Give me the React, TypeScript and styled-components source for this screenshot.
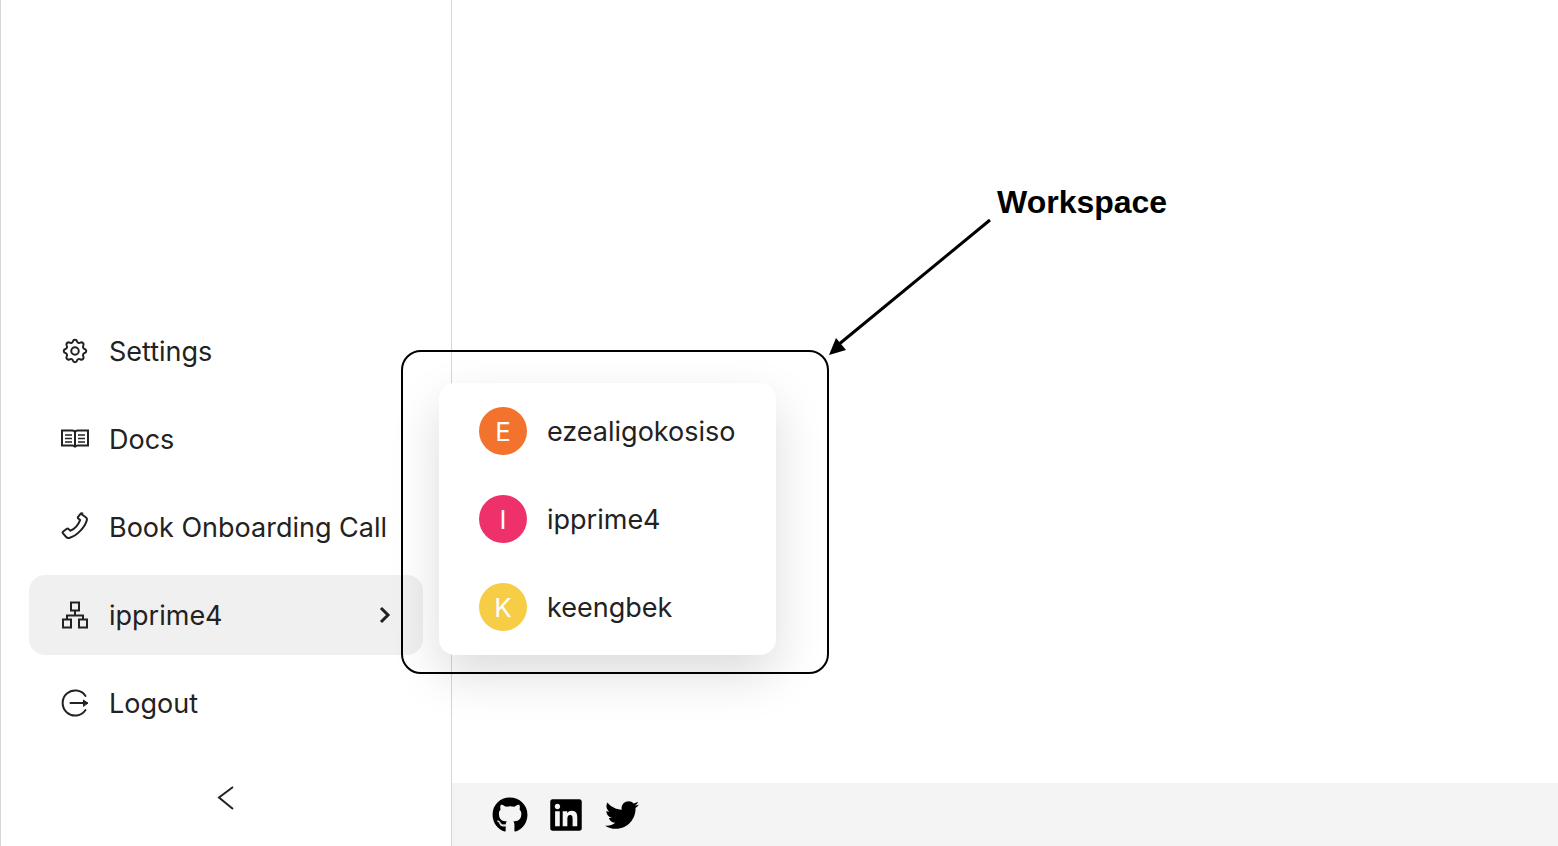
import React from "react";
import styled, { createGlobalStyle } from "styled-components";
import { FaGithub, FaLinkedin, FaTwitter } from "react-icons/fa";
import { TbSettings } from "react-icons/tb";

const GlobalStyle = createGlobalStyle`
  html, body {
    margin: 0;
    padding: 0;
    background: #fff;
    overflow: hidden;
  }
  * {
    box-sizing: border-box;
  }
`;

const Page = styled.div`
  position: relative;
  display: flex;
  width: 100%;
  height: 100vh;
  font-family: Inter, "Liberation Sans", sans-serif;
  color: #222;
`;

const Sidebar = styled.aside`
  width: 452px;
  flex: none;
  display: flex;
  flex-direction: column;
  justify-content: flex-end;
  padding: 0 28px;
  border-left: 1px solid #d6d6d6;
  border-right: 1px solid #d6d6d6;
`;

const NavList = styled.nav`
  display: flex;
  flex-direction: column;
  gap: 8px;
`;

const NavItem = styled.div<{ $active?: boolean }>`
  height: 80px;
  display: flex;
  align-items: center;
  gap: 19px;
  padding: 0 31px;
  border-radius: 16px;
  font-size: 27px;
  white-space: nowrap;
  background: ${(p) => (p.$active ? "#f0f0f0" : "transparent")};
`;

const NavIcon = styled.span`
  width: 30px;
  height: 30px;
  flex: none;
  display: flex;
  align-items: center;
  justify-content: center;
`;

const NavLabel = styled.span`
  flex: 1;
`;

const CollapseRow = styled.div`
  height: 103px;
  display: flex;
  align-items: center;
  justify-content: center;
  padding-top: 7px;
`;

const Main = styled.main`
  flex: 1;
  display: flex;
  flex-direction: column;
  justify-content: flex-end;
`;

const Footer = styled.footer`
  height: 63px;
  display: flex;
  align-items: center;
  gap: 20px;
  padding-left: 40px;
  background: #f4f4f4;
  color: #000;
`;

const SocialIcon = styled.span`
  width: 36px;
  height: 36px;
  display: flex;
  align-items: center;
  justify-content: center;
`;

const WorkspaceMenu = styled.div`
  position: absolute;
  left: 439px;
  top: 383px;
  width: 337px;
  padding: 4px 0;
  background: #fff;
  border-radius: 16px;
  box-shadow: 0 20px 50px rgba(0, 0, 0, 0.14);
`;

const WorkspaceRow = styled.div`
  height: 88px;
  display: flex;
  align-items: center;
  gap: 20px;
  padding: 0 40px;
  font-size: 27px;
`;

const Avatar = styled.span<{ $color: string }>`
  width: 48px;
  height: 48px;
  flex: none;
  display: flex;
  align-items: center;
  justify-content: center;
  border-radius: 50%;
  color: #fff;
  font-size: 26px;
  background: ${(p) => p.$color};
`;

const Highlight = styled.div`
  position: absolute;
  left: 401px;
  top: 350px;
  width: 428px;
  height: 324px;
  border: 2px solid #000;
  border-radius: 20px;
  pointer-events: none;
`;

const CalloutLabel = styled.div`
  position: absolute;
  left: 997px;
  top: 184px;
  font-family: "Liberation Sans", Arial, sans-serif;
  font-weight: 700;
  font-size: 32px;
  line-height: 37px;
  color: #000;
`;

const CalloutArrow = styled.svg`
  position: absolute;
  left: 820px;
  top: 210px;
`;

const stroke = {
  fill: "none",
  stroke: "currentColor",
  strokeWidth: 2,
  strokeLinecap: "round" as const,
  strokeLinejoin: "round" as const,
};

function BookIcon() {
  return (
    <svg width="30" height="30" viewBox="0 0 30 30" {...stroke} strokeLinecap="butt" strokeLinejoin="miter">
      <path d="M2 6.5h10c1.6 0 3 .8 3 2v15c0-1-1.4-2-3-2H2zM28 6.5H18c-1.600 0-3 .8-3 2v15c0-1 1.400-2 3-2h10z" />
      <path d="M5 11h7M5 14.500h7M5 18h7M18 11h7M18 14.500h7M18 18h7" strokeWidth="1.700" />
    </svg>
  );
}

function PhoneIcon() {
  return (
    <svg width="30" height="30" viewBox="0 0 30 30" {...stroke}>
      <path d="M22 2.500l3.800 2.700c1 .8 1.400 1.800 1 3-1.600 6.600-9.600 15.400-17 17.600-1.500.4-2.700.2-3.600-.8l-3.200-3.600c-.6-.7-.5-1.400.2-1.900l3.600-2.700c.6-.4 1.200-.4 1.700.1l2 1.800c3.800-1.700 8-6.400 9.600-10.600l-1.800-1.500c-.6-.5-.6-1.200-.2-1.800l2.400-3c.5-.6 1.200-.6 1.800-.3z" />
    </svg>
  );
}

function NetworkIcon() {
  return (
    <svg width="30" height="30" viewBox="0 0 30 30" {...stroke} strokeLinecap="butt" strokeLinejoin="miter">
      <path d="M11 2.500h8v8h-8zM3 19.500h8v8H3zM19 19.500h8v8h-8zM15 10.500v5M7 19.500v-4h16v4" />
    </svg>
  );
}

function LogoutIcon() {
  return (
    <svg width="30" height="30" viewBox="0 0 30 30" {...stroke}>
      <path d="M25.500 8A12.500 12.500 0 1 0 25.500 22" />
      <path d="M10.500 15H27" />
      <path d="M27.500 15l-4-3v6z" fill="currentColor" strokeWidth="1" />
    </svg>
  );
}

function ChevronRight() {
  return (
    <svg width="14" height="20" viewBox="0 0 14 20" fill="none" stroke="#222" strokeWidth="3">
      <path d="M3 3l7 7-7 7" />
    </svg>
  );
}

function ChevronLeft() {
  return (
    <svg width="20" height="28" viewBox="0 0 20 28" fill="none" stroke="#222" strokeWidth="2">
      <path d="M17 3L3 13.500 17 25" />
    </svg>
  );
}

const workspaces = [
  { name: "ezealigokosiso", initial: "E", color: "#f2722e" },
  { name: "ipprime4", initial: "I", color: "#ee316b" },
  { name: "keengbek", initial: "K", color: "#f7cd45" },
];

export default function App() {
  return (
    <Page>
      <GlobalStyle />
      <Sidebar>
        <NavList>
          <NavItem>
            <NavIcon>
              <TbSettings size={32} strokeWidth={1.6} />
            </NavIcon>
            <NavLabel>Settings</NavLabel>
          </NavItem>
          <NavItem>
            <NavIcon>
              <BookIcon />
            </NavIcon>
            <NavLabel>Docs</NavLabel>
          </NavItem>
          <NavItem>
            <NavIcon>
              <PhoneIcon />
            </NavIcon>
            <NavLabel>Book Onboarding Call</NavLabel>
          </NavItem>
          <NavItem $active>
            <NavIcon>
              <NetworkIcon />
            </NavIcon>
            <NavLabel>ipprime4</NavLabel>
            <ChevronRight />
          </NavItem>
          <NavItem>
            <NavIcon>
              <LogoutIcon />
            </NavIcon>
            <NavLabel>Logout</NavLabel>
          </NavItem>
        </NavList>
        <CollapseRow>
          <ChevronLeft />
        </CollapseRow>
      </Sidebar>
      <Main>
        <Footer>
          <SocialIcon>
            <FaGithub size={36} />
          </SocialIcon>
          <SocialIcon>
            <FaLinkedin size={36} />
          </SocialIcon>
          <SocialIcon>
            <FaTwitter size={34} />
          </SocialIcon>
        </Footer>
      </Main>
      <WorkspaceMenu>
        {workspaces.map((w) => (
          <WorkspaceRow key={w.name}>
            <Avatar $color={w.color}>{w.initial}</Avatar>
            {w.name}
          </WorkspaceRow>
        ))}
      </WorkspaceMenu>
      <Highlight />
      <CalloutLabel>Workspace</CalloutLabel>
      <CalloutArrow width="180" height="150" viewBox="0 0 180 150">
        <path d="M170 10L18 135" stroke="#000" strokeWidth="3" fill="none" />
        <path d="M9 145l7-17 10 12z" fill="#000" />
      </CalloutArrow>
    </Page>
  );
}
